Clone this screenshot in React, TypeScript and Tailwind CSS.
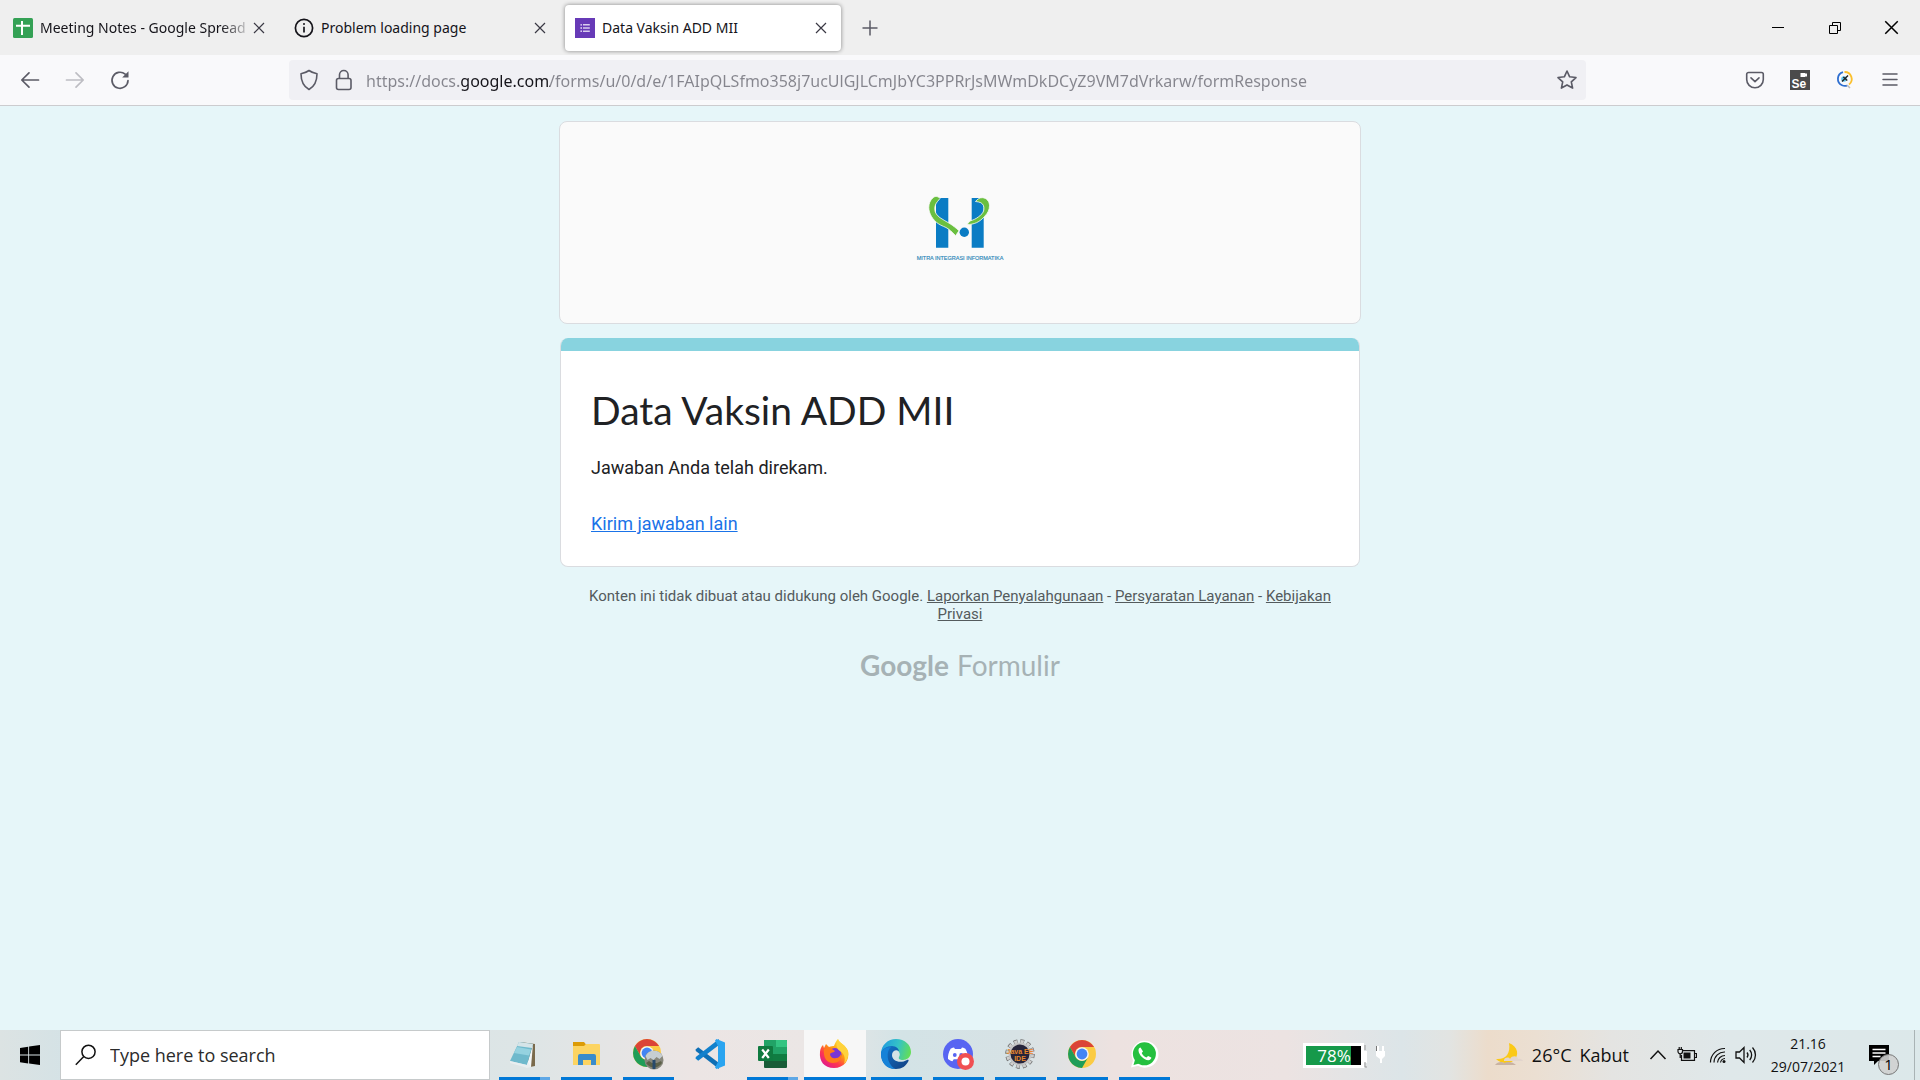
import type { ReactNode } from "react";

const UI = "font-['Open_Sans','Noto_Sans',sans-serif]";

function CloseGlyph({ size, className = "" }: { size: number; className?: string }) {
  return (
    <svg width={size} height={size} viewBox="0 0 12 12" className={className} fill="none" stroke="currentColor" strokeWidth="1.2">
      <path d="M1 1l10 10M11 1L1 11" />
    </svg>
  );
}

function SheetsIcon() {
  return (
    <svg width="20" height="20" viewBox="0 0 20 20">
      <rect width="20" height="20" rx="1.5" fill="#34a155" />
      <path d="M3 7.7h14M9 3v14" stroke="#fff" strokeWidth="2" />
    </svg>
  );
}

function InfoIcon() {
  return (
    <svg width="20" height="20" viewBox="0 0 20 20" fill="none" stroke="#15141a">
      <circle cx="10" cy="10" r="8.6" strokeWidth="1.7" />
      <path d="M10 8.8v5.6" strokeWidth="1.7" />
      <circle cx="10" cy="6.1" r="1" fill="#15141a" stroke="none" />
    </svg>
  );
}

function FormsIcon() {
  return (
    <svg width="20" height="20" viewBox="0 0 20 20">
      <rect width="20" height="20" fill="#673ab7" />
      <g fill="#d9cdee">
        <circle cx="6.2" cy="6.8" r="0.9" />
        <circle cx="6.2" cy="10" r="0.9" />
        <circle cx="6.2" cy="13.2" r="0.9" />
        <path d="M8 6.1h6.8v1.4H8zM8 9.3h6.8v1.4H8zM8 12.5h6.8v1.4H8z" />
      </g>
    </svg>
  );
}

function Tab({ icon, title, active = false, faded = false }: { icon: ReactNode; title: string; active?: boolean; faded?: boolean }) {
  return (
    <div
      className={
        "flex h-[46px] w-[276px] items-center rounded pl-2.5 pr-3.5 " +
        (active ? "bg-white shadow-[0_0_4px_rgba(0,0,0,0.45)]" : "")
      }
    >
      {icon}
      <button
        type="button"
        className={
          "ml-[7px] min-w-0 flex-1 whitespace-nowrap text-left font-['Noto_Sans',sans-serif] text-[14px] leading-5 text-[#15141a] " +
          (faded ? "[mask-image:linear-gradient(to_left,transparent,black_32px)]" : "")
        }
      >
        {title}
      </button>
      <button type="button" aria-label="Close tab" className="text-[#3a3944]">
        <CloseGlyph size={12} />
      </button>
    </div>
  );
}

function TabBar() {
  return (
    <div className="flex h-[55px] items-center justify-between bg-[#efefef]">
      <div className="flex items-center gap-[5px] pl-[3px]">
        <Tab icon={<SheetsIcon />} title="Meeting Notes - Google Spread" faded />
        <Tab icon={<InfoIcon />} title="Problem loading page" />
        <Tab icon={<FormsIcon />} title="Data Vaksin ADD MII" active />
        <button type="button" aria-label="New tab" className="ml-4 text-[#5b5b66]">
          <svg width="16" height="16" viewBox="0 0 16 16" fill="none" stroke="currentColor" strokeWidth="1.5">
            <path d="M8 .5v15M.5 8h15" />
          </svg>
        </button>
      </div>
      <div className="flex items-center pr-[21px]">
        <button type="button" aria-label="Minimize" className="mr-[43px]">
          <svg width="14" height="14" viewBox="0 0 14 14" stroke="#000">
            <path d="M1 6.5h12" />
          </svg>
        </button>
        <button type="button" aria-label="Restore" className="mr-[42px]">
          <svg width="14" height="14" viewBox="0 0 14 14" fill="none" stroke="#000">
            <path d="M1.500 4.500h8v8h-8zM4.500 4.500v-3h8v8h-3" />
          </svg>
        </button>
        <button type="button" aria-label="Close window">
          <CloseGlyph size={15} />
        </button>
      </div>
    </div>
  );
}

function NavBar() {
  return (
    <div className="flex h-[51px] items-center border-b border-[#cccccf] bg-[#f9f9fb] text-[#5b5b66]">
      <div className="flex items-center gap-[25px] pl-5">
        <button type="button" aria-label="Back">
          <svg width="20" height="20" viewBox="0 0 20 20" fill="none" stroke="currentColor" strokeWidth="1.7" strokeLinecap="round" strokeLinejoin="round">
            <path d="M18.500 10H2M9 2.800L1.800 10l7.200 7.200" />
          </svg>
        </button>
        <button type="button" aria-label="Forward" className="text-[#bdbdc3]">
          <svg width="20" height="20" viewBox="0 0 20 20" fill="none" stroke="currentColor" strokeWidth="1.7" strokeLinecap="round" strokeLinejoin="round">
            <path d="M1.500 10H18M11 2.800l7.200 7.200-7.200 7.200" />
          </svg>
        </button>
        <button type="button" aria-label="Reload">
          <svg width="20" height="20" viewBox="0 0 20 20" fill="none" stroke="currentColor" strokeWidth="1.7" strokeLinecap="round">
            <path d="M15.200 4.200A8 8 0 1 0 18 10.500" />
            <path d="M18.500 1.200v6.300h-6.300z" fill="currentColor" stroke="none" />
          </svg>
        </button>
      </div>
      <div className="ml-[159px] flex h-10 flex-1 items-center rounded bg-[#f0f0f4] pl-2.5 pr-2">
        <button type="button" aria-label="Tracking protection">
          <svg width="20" height="22" viewBox="0 0 20 22" fill="none" stroke="currentColor" strokeWidth="1.6" strokeLinejoin="round">
            <path d="M10 1.500c2.200 1.700 4.700 2.600 8 3.200 0 6.600-1.700 12.200-8 15.800C3.700 16.900 2 11.300 2 4.700c3.300-.6 5.800-1.500 8-3.200z" />
          </svg>
        </button>
        <button type="button" aria-label="Site information" className="ml-[15px]">
          <svg width="20" height="22" viewBox="0 0 20 22" fill="none" stroke="currentColor" strokeWidth="1.6">
            <rect x="2.500" y="9.500" width="14.500" height="11" rx="2" />
            <path d="M5.500 9.500V5.800a4.300 4.300 0 0 1 8.600 0v3.700" />
          </svg>
        </button>
        <input
          aria-label="Address"
          readOnly
          value="https://docs.google.com/forms/u/0/d/e/1FAIpQLSfmo358j7ucUlGJLCmJbYC3PPRrJsMWmDkDCyZ9VM7dVrkarw/formResponse"
          className="ml-3 h-8 min-w-0 flex-1 bg-[linear-gradient(to_right,#85858d_0,#85858d_93px,#15141a_93px,#15141a_184px,#85858d_184px)] bg-clip-text pt-0.5 font-['Noto_Sans',sans-serif] text-[16px] text-transparent outline-none"
        />
        <button type="button" aria-label="Bookmark this page">
          <svg width="22" height="22" viewBox="0 0 24 24" fill="none" stroke="currentColor" strokeWidth="1.8" strokeLinejoin="round">
            <path d="M12 2.200l2.900 6.300 6.900.8-5.100 4.700 1.400 6.800-6.100-3.400-6.100 3.400 1.400-6.800L2.200 9.300l6.900-.8z" />
          </svg>
        </button>
      </div>
      <div className="ml-[159px] flex items-center gap-[25px] pr-5">
        <button type="button" aria-label="Save to Pocket">
          <svg width="20" height="20" viewBox="0 0 20 20" fill="none" stroke="currentColor" strokeWidth="1.6" strokeLinecap="round" strokeLinejoin="round">
            <path d="M3.500 2.500h13A1.800 1.800 0 0 1 18.300 4.300V9.500a8.300 8.300 0 0 1-16.600 0V4.300A1.800 1.800 0 0 1 3.500 2.500z" />
            <path d="M6 7.800l4 3.800 4-3.800" />
          </svg>
        </button>
        <button type="button" aria-label="Selenium IDE" className="flex h-5 w-5 flex-col bg-[#4b4b4b] text-white">
          <svg width="20" height="20" viewBox="0 0 20 20">
            <path d="M10.500 3h5v1l1.500-.8v3.600L15.500 6v1h-5z" fill="#fff" />
            <text x="1.500" y="17.800" fontSize="12" fontWeight="700" fontFamily="Liberation Sans, sans-serif" fill="#fff">Se</text>
          </svg>
        </button>
        <button type="button" aria-label="Inspector extension">
          <svg width="20" height="20" viewBox="0 0 20 20" fill="none">
            <path d="M8 2.200A7 7 0 0 0 7 15.300a7 7 0 0 0 5 .3" stroke="#2f6fd0" strokeWidth="1.800" />
            <path d="M9.500 2a7 7 0 0 1 4.500 12.500" stroke="#fbc02d" strokeWidth="1.800" />
            <circle cx="9" cy="9" r="2.800" fill="#5ec5ee" />
            <path d="M7 11.500l6-6M8.300 7l4 3.500" stroke="#222" strokeWidth="1.400" />
            <path d="M12 15l3 3" stroke="#bbb" strokeWidth="1.500" />
          </svg>
        </button>
        <button type="button" aria-label="Open menu">
          <svg width="20" height="20" viewBox="0 0 20 20" stroke="currentColor" strokeWidth="1.5" strokeLinecap="round">
            <path d="M3 4h14M3 9.500h14M3 15h14" />
          </svg>
        </button>
      </div>
    </div>
  );
}

function CompanyLogo() {
  return (
    <svg width="90" height="70" viewBox="1 0 90 70" role="img" aria-label="Mitra Integrasi Informatika">
      <path d="M22 5h12.300v49.700H22zM57.700 5h12v49.700h-12z" fill="#0a7cc4" />
      <circle cx="50.300" cy="39.300" r="4.700" fill="#0a7cc4" />
      <path
        d="M26 5.500C24 3 21 3 19.300 4.500 16 7 14.800 11 14.800 14.500c0 6 4 12.500 9.500 16.200 3.500 2.400 7 3 10 5.200 3 2.200 5 4.400 7.300 6.800l3.400-5C42 35 39.500 33 36 30.700c-3.500-2.400-7-3.700-10-6-3-2.400-5-4.700-5.200-8.200-.2-3.500 1-6 2.700-8z"
        fill="#6abf3f"
        stroke="#fafafa"
        strokeWidth="0.800"
      />
      <path
        d="M61.500 8.500c2-2.500 4.500-4 7-3.800 4 .3 7 3.500 7 8 0 4-1.800 7.500-4.700 10.500-2.500 2.700-5 5-8.300 6.500-3 1.300-6 1.800-9.500 1.800L56 28c3-1 5.800-2 8.300-4 3-2.300 5-4 5.500-7 .5-3.500-.5-6-3-7.300-1.500-.8-3.300-.9-5.300-1.200z"
        fill="#6abf3f"
        stroke="#fafafa"
        strokeWidth="0.800"
      />
      <text x="46" y="67" textAnchor="middle" fontSize="5.500" fontFamily="Liberation Sans, sans-serif" fill="#2b87b8" stroke="#2b87b8" strokeWidth="0.150">
        MITRA INTEGRASI INFORMATIKA
      </text>
    </svg>
  );
}

function FormPage() {
  return (
    <main className="flex flex-1 flex-col items-center bg-[#e6f6f9] pt-[15px] font-['Roboto',sans-serif]">
      <div className="flex w-full max-w-[802px] items-center justify-center rounded-lg border border-[#dadce0] bg-[#fafafa] pb-[59px] pt-[65px]">
        <div className="flex h-[77px] items-center pt-1">
          <CompanyLogo />
        </div>
      </div>
      <section className="mt-3.5 w-full max-w-[800px] overflow-hidden rounded-lg border border-t-0 border-[#dadce0] bg-white">
        <div className="h-[13px] bg-[#88d3df]" />
        <div className="px-[30px] pb-[30px] pt-[34px]">
          <h1 className="font-['Lato',sans-serif] text-[39px] leading-[50px] text-[#202124]">Data Vaksin ADD MII</h1>
          <p className="mt-5 text-[18px] leading-[25px] text-[#202124]">Jawaban Anda telah direkam.</p>
          <p className="mt-[31px] text-[18px] leading-[25px]">
            <a href="#again" className="text-[#1a73e8] underline">Kirim jawaban lain</a>
          </p>
        </div>
      </section>
      <footer className="mt-5 w-full max-w-[800px] px-[15px] text-center text-[15px] leading-[18px] text-[#545b5d]">
        Konten ini tidak dibuat atau didukung oleh Google.{" "}
        <a href="#report" className="underline">Laporkan Penyalahgunaan</a> -{" "}
        <a href="#terms" className="underline">Persyaratan Layanan</a> -{" "}
        <a href="#privacy" className="underline">Kebijakan Privasi</a>
      </footer>
      <a href="#forms" className="mt-6 flex items-baseline gap-2 font-['Lato',sans-serif] text-[28px] leading-9 text-[#a6b2b5]">
        <span className="font-bold">Google</span>
        <span>Formulir</span>
      </a>
    </main>
  );
}

function NotepadIcon() {
  return (
    <svg width="30" height="30" viewBox="0 0 30 30">
      <path d="M11 3l15 2v22l-5 1z" fill="#7a6a4c" />
      <path d="M24 5l-2 23-5 .5z" fill="#f3f6f7" />
      <path d="M10 3l14 2-6 21L1 22z" fill="#6fb9cc" />
      <path d="M10 3l14 2-1 4L8 7z" fill="#d5e4e8" />
      <path d="M8 8l14 2.500-2 6L5 14z" fill="#95d2e0" />
      <path d="M1 22l17 4 1-3 3 5-5 .5L1 24z" fill="#e8eef0" />
    </svg>
  );
}

function ExplorerIcon() {
  return (
    <svg width="30" height="30" viewBox="0 0 30 30">
      <path d="M2 3h11l2 2.500V9H2z" fill="#dc9b06" />
      <path d="M2 7h11l2-2h13a1 1 0 0 1 1 1v20H2z" fill="#fcd462" />
      <path d="M7 26V17a2 2 0 0 1 2-2h14a2 2 0 0 1 2 2v9h-5v-5h-8v5z" fill="#3a8ccb" />
    </svg>
  );
}

function ChromeGlyph() {
  return (
    <g>
      <circle cx="15" cy="15" r="14" fill="#fbcb43" />
      <path d="M2.900 8A14 14 0 0 1 27.100 8H15a7 7 0 0 0-6.100 10.500z" fill="#db4437" />
      <path d="M2.900 8A14 14 0 0 0 15 29l6-10.500a7 7 0 0 1-12.100 0z" fill="#1f9d58" />
      <circle cx="15" cy="15" r="6.800" fill="#f5f5f5" />
      <circle cx="15" cy="15" r="5.400" fill="#4285f4" />
    </g>
  );
}

function ChromeIcon({ profile = false }: { profile?: boolean }) {
  return (
    <svg width="32" height="32" viewBox={profile ? "0 0 32 32" : "-1 -1 32 32"}>
      <ChromeGlyph />
      {profile && (
        <g>
          <circle cx="22" cy="22" r="9.500" fill="#87877c" />
          <path d="M13.500 18a9.500 9.500 0 0 1 17 0l-3 3-3-2-3 3-3-2-3 2z" fill="#c6ced2" />
          <path d="M14 25l3-2 3 2h5l4-2 1 2a9.500 9.500 0 0 1-16 0z" fill="#5c6048" />
          <path d="M20.500 22h3v9h-3z" fill="#27496b" />
        </g>
      )}
    </svg>
  );
}

function VsCodeIcon() {
  return (
    <svg width="32" height="32" viewBox="0 0 32 32">
      <path d="M1.500 11.500L4.200 9.200 25 25v6L1.800 13z" fill="#0f6fb5" />
      <path d="M1.500 20.500l2.700 2.300L25 7V1L1.800 19z" fill="#1280cc" />
      <path d="M22.500 1L31 4.500v23L22.500 31 21 29.500 24 24V8l-3-5.500z" fill="#2aa4f0" />
    </svg>
  );
}

function ExcelIcon() {
  return (
    <svg width="30" height="30" viewBox="0 0 30 30">
      <rect x="7" y="1" width="23" height="28" rx="1" fill="#185c37" />
      <path d="M7 1h12v14H7z" fill="#21a366" />
      <path d="M19 1h10a1 1 0 0 1 1 1v6H19z" fill="#33c481" />
      <path d="M19 8h11v7H19z" fill="#21a366" />
      <path d="M7 15h12v7H7z" fill="#107c41" />
      <path d="M19 15h11v7H19z" fill="#107c41" />
      <rect x="1" y="7" width="15" height="15" rx="1" fill="#0f7a3f" />
      <path d="M5.200 10.500l6.600 8.500M11.800 10.500L5.200 19" stroke="#fff" strokeWidth="2.200" />
    </svg>
  );
}

function FirefoxIcon() {
  return (
    <svg width="32" height="32" viewBox="0 0 32 32">
      <defs>
        <linearGradient id="ff" x1="0.850" y1="0.100" x2="0.200" y2="0.950">
          <stop offset="0" stopColor="#fff14a" />
          <stop offset="0.400" stopColor="#ff980e" />
          <stop offset="0.700" stopColor="#ff3750" />
          <stop offset="1" stopColor="#e01a8a" />
        </linearGradient>
      </defs>
      <path d="M20 1c1 4 8 6 10 12 2 9-4 17-14 17S1 23 2 14c.3-3 1.300-5.500 3-7l1 3 2-4 3 3c2-1 4-1 5-1 1-3 2-5 4-7z" fill="url(#ff)" />
      <circle cx="17" cy="16.500" r="6.500" fill="#7a36d6" />
      <path d="M6 11c3-2 6-2 8 0l3 2c-1 2-4 1-5 3 0 3 3 5 6 4 3 0 4-2 5-4 1 6-3 9-8 9-6 0-10-5-9-14z" fill="#ff7a1c" />
      <path d="M20 1c1 4 8 6 10 12 1 5-1 10-4 13 2-6 0-11-4-13-3-2-5-6-2-12z" fill="#ffd23a" />
    </svg>
  );
}

function EdgeIcon() {
  return (
    <svg width="32" height="32" viewBox="0 0 32 32">
      <defs>
        <linearGradient id="edgeTop" x1="0" y1="0.300" x2="1" y2="0.500">
          <stop offset="0" stopColor="#1f9be0" />
          <stop offset="0.550" stopColor="#35c2c6" />
          <stop offset="1" stopColor="#63de58" />
        </linearGradient>
        <linearGradient id="edgeLow" x1="0" y1="0" x2="1" y2="1">
          <stop offset="0" stopColor="#1277cf" />
          <stop offset="1" stopColor="#123f80" />
        </linearGradient>
      </defs>
      <path d="M1 16C1 7 8 1 16 1c9 0 15 6 15 13 0 5-4 8-8 8-3 0-5-1-4-3 2-3 0-8-6-8C7 11 1 15 1 16z" fill="url(#edgeTop)" />
      <path d="M1 16c0-5 6-8 11-8 4 0 7 3 7 5-3-2-7 0-7 4 0 6 8 9 15 5 1-.5 2 0 1.500 1C26 28 22 31 16 31 8 31 1 25 1 16z" fill="url(#edgeLow)" />
      <path d="M1 16c0-4 5-7 10-7-5 4-5 16 4 22C7 31 1 25 1 16z" fill="#1682d8" />
    </svg>
  );
}

function DiscordIcon() {
  return (
    <svg width="32" height="32" viewBox="0 0 32 32">
      <circle cx="16" cy="16" r="15" fill="#5865f2" />
      <path d="M12 9.500l1 1.500h6l1-1.500c2 .3 3 1 3.500 1.500 2 3.500 2.800 7 2.500 10-1.500 1.300-3 1.900-4.500 2.200l-1.200-2h-8.600l-1.200 2c-1.500-.3-3-.9-4.500-2.200-.3-3 .5-6.500 2.500-10 .5-.5 1.500-1.200 3.500-1.500z" fill="#fff" />
      <circle cx="12.800" cy="17" r="1.900" fill="#5865f2" />
      <circle cx="19.200" cy="17" r="1.900" fill="#5865f2" />
      <circle cx="23.500" cy="23.500" r="8.500" fill="#f04f52" />
      <circle cx="23.500" cy="23.500" r="4" fill="#fff" />
    </svg>
  );
}

function JavaIdeIcon() {
  return (
    <svg width="32" height="32" viewBox="0 0 32 32">
      <circle cx="16" cy="16" r="12.500" fill="none" stroke="#6b6b6b" strokeWidth="4.500" strokeDasharray="3.700 2.845" />
      <circle cx="16" cy="16" r="12.200" fill="none" stroke="#cfcfcf" strokeWidth="3.600" strokeDasharray="2.900 3.488" strokeDashoffset="-0.400" />
      <circle cx="16" cy="16" r="10.500" fill="#26243a" stroke="#c4c4c4" strokeWidth="2" />
      <text x="16" y="15.500" textAnchor="middle" fontSize="7" fontWeight="700" fontFamily="Liberation Sans, sans-serif" fill="#e8872c">Java EE</text>
      <text x="16" y="22.500" textAnchor="middle" fontSize="7" fontWeight="700" fontFamily="Liberation Sans, sans-serif" fill="#e8872c">IDE</text>
    </svg>
  );
}

function WhatsAppIcon() {
  return (
    <svg width="30" height="30" viewBox="0 0 30 30">
      <path d="M2 28.500l2-7A13.500 13.500 0 1 1 9 26.800z" fill="#fff" />
      <circle cx="15.400" cy="14.800" r="11.500" fill="#25c03f" />
      <path d="M4.500 26l1.700-6 4 4.500z" fill="#25c03f" />
      <path
        d="M11.500 8.500c-.8 0-2.200 1.200-2 3.200.5 4.500 5.500 9.300 9.800 9.500 1.800 0 3.200-1.200 3-2.600l-3.200-1.700-1.700 1.700c-2.200-.8-3.700-2.300-4.700-4.500l1.300-1.500z"
        fill="#fff"
      />
    </svg>
  );
}

function TaskButton({ label, icon, state }: { label: string; icon: ReactNode; state: "idle" | "open" | "multi" | "active" }) {
  return (
    <button
      type="button"
      aria-label={label}
      className={"flex h-full w-[62px] flex-col " + (state === "active" ? "bg-[#f7f7f7]" : "pl-[5px] pr-[6px]")}
    >
      <span className={"flex flex-1 items-center justify-center " + (state === "active" ? "pr-[3px]" : "pr-0.5")}>{icon}</span>
      <span className="flex h-[3px] w-full">
        {state !== "idle" && <span className="flex-1 bg-[#0078d7]" />}
        {state === "multi" && <span className="w-2.5 bg-[#5fa8e6]" />}
      </span>
    </button>
  );
}

function Taskbar() {
  return (
    <div className="flex h-[50px] items-stretch bg-[linear-gradient(to_right,#dce3e3_0%,#d3e2e6_4%,#dde5e6_27%,#ece5e4_36%,#ebe6e5_42%,#d3e3e6_47%,#d7e2e5_53%,#ede2e0_58%,#ece3e2_67%,#dce5e8_73%,#e2e4e2_75.5%,#ecdccb_77.500%,#ebdfd2_80%,#e4e4e2_84%,#dfe8ea_90%,#dce8ea_100%)]">
      <button type="button" aria-label="Start" className="flex w-[60px] items-center justify-center">
        <svg width="20" height="20" viewBox="0 0 20 20" fill="#000">
          <path d="M0 2.900L8.200 1.700v7.900H0zM9.100 1.600L20 0v9.600H9.100zM0 10.500h8.200v7.900L0 17.200zM9.100 10.500H20V20L9.100 18.500z" />
        </svg>
      </button>
      <label className="flex w-[430px] items-center border border-[#c6cacb] bg-white pl-3.5">
        <svg width="22" height="22" viewBox="0 0 22 22" fill="none" stroke="#111" strokeWidth="1.500">
          <circle cx="13.500" cy="7.800" r="6.600" />
          <path d="M8.800 12.500L.8 20.800" />
        </svg>
        <input aria-label="Search" placeholder="Type here to search" className="ml-[13px] min-w-0 flex-1 bg-transparent text-[18px] text-[#222] outline-none placeholder:text-[#2b2b2b]" />
      </label>
      <div className="ml-1 flex">
        <TaskButton label="Notepad" icon={<NotepadIcon />} state="multi" />
        <TaskButton label="File Explorer" icon={<ExplorerIcon />} state="open" />
        <TaskButton label="Chrome profile" icon={<ChromeIcon profile />} state="open" />
        <TaskButton label="Visual Studio Code" icon={<VsCodeIcon />} state="idle" />
        <TaskButton label="Excel" icon={<ExcelIcon />} state="multi" />
        <TaskButton label="Firefox" icon={<FirefoxIcon />} state="active" />
        <TaskButton label="Edge" icon={<EdgeIcon />} state="open" />
        <TaskButton label="Discord" icon={<DiscordIcon />} state="open" />
        <TaskButton label="Java EE IDE" icon={<JavaIdeIcon />} state="open" />
        <TaskButton label="Chrome" icon={<ChromeIcon />} state="open" />
        <TaskButton label="WhatsApp" icon={<WhatsAppIcon />} state="open" />
      </div>
      <div className="ml-auto flex items-center">
        <div className="flex h-[25px] w-[61px] border-[3px] border-white bg-black">
          <div className="w-[45px] bg-[#16994a] text-right text-[17px] leading-[19px] text-white">78%</div>
        </div>
        <svg width="22" height="26" viewBox="0 0 22 26" fill="#fff" className="mr-[108px]">
          <path d="M0 9h3v12H0zM13 4h2v5h3V4h2v5h1v5l-3 3v4h-2v-4l-4-3V9h1z" />
          <path d="M1 3v5M1 20v5h2" stroke="#999" fill="none" />
          <path d="M12.500 4v5" stroke="#777" />
        </svg>
        <svg width="30" height="26" viewBox="0 0 30 26">
          <path d="M15 1c9 3 11 13 4 18-5 4-13 2-17-2 9 1 15-5 13-16z" fill="#fbc916" />
          <path d="M10 18c1-3 5-3 6-1 2-4 8-3 8 0 2-1 5 1 5 2H10z" fill="#e2d5cd" />
          <path d="M1 23c2-3 7-4 9-2 4-2 9-1 12 2z" fill="#c9b3a3" />
        </svg>
        <button type="button" className="ml-2 whitespace-nowrap text-[18px] text-[#111]">
          26°C<span className="ml-2">Kabut</span>
        </button>
        <button type="button" aria-label="Show hidden icons" className="ml-5">
          <svg width="18" height="18" viewBox="0 0 18 18" fill="none" stroke="#111" strokeWidth="1.500">
            <path d="M1.500 13L9 5l7.500 8" />
          </svg>
        </button>
        <svg width="20" height="18" viewBox="0 0 20 18" fill="none" stroke="#111" strokeWidth="1.200" className="ml-2.5">
          <path d="M6 4.600h11.500v9.800H4.500V9M18 7.500h1.500v4H18M1 3.500h4.500v2A2.200 2.200 0 0 1 1 5.500zM2.200 1v2.500M4.300 1v2.500M3.200 8v4" />
          <path d="M6.500 6.500h7v6h-7z" fill="#111" stroke="none" />
        </svg>
        <svg width="18" height="18" viewBox="0 0 18 18" fill="none" stroke="#111" strokeWidth="1.200" className="ml-3">
          <path d="M1.500 16.500A14 14 0 0 1 16 2.500M5 16.500A10.500 10.500 0 0 1 16 6M8.500 16.500A7.500 7.500 0 0 1 16 9.500M11.500 16.500A5 5 0 0 1 16 12.500" />
          <circle cx="15" cy="15.500" r="1.500" fill="#111" stroke="none" />
        </svg>
        <svg width="22" height="20" viewBox="0 0 22 20" fill="none" stroke="#111" strokeWidth="1.300" className="ml-2">
          <path d="M1 7h3.500L9 2.500v15L4.500 13H1zM12 7.500a4 4 0 0 1 0 5M14.700 5a7.500 7.500 0 0 1 0 10M17.500 2.500a11 11 0 0 1 0 15" />
        </svg>
        <div className="ml-2.5 w-[82px] whitespace-nowrap text-center text-[14px] leading-[23px] text-[#111]">
          <div>21.16</div>
          <div>29/07/2021</div>
        </div>
        <button type="button" aria-label="1 notification" className="relative ml-5 h-5 w-5">
          <svg width="20" height="20" viewBox="0 0 20 20">
            <path d="M0 0h20v16H9l-4 4v-4H0z" fill="#000" />
            <path d="M3.500 4.500h13M3.500 8h13M3.500 11.500h8" stroke="#fff" strokeWidth="1.300" />
          </svg>
          <span className="absolute left-[9px] top-[9px] flex h-[21px] w-[21px] items-center justify-center rounded-full border border-[#777] bg-[#cfd0d0]/90 text-[15px] text-black">
            1
          </span>
        </button>
        <div className="ml-[25px] h-[50px] w-1.5 border-l border-[#a9b3b5]" />
      </div>
    </div>
  );
}

export default function App() {
  return (
    <div className={"flex min-h-screen flex-col " + UI}>
      <TabBar />
      <NavBar />
      <FormPage />
      <Taskbar />
    </div>
  );
}
